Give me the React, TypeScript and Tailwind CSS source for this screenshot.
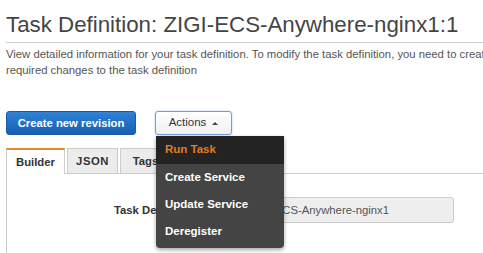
const menuItems = ['Run Task', 'Create Service', 'Update Service', 'Deregister'];

const App = () => {
	return (
		<div className="relative w-[483px] h-[253px] overflow-hidden bg-white text-[#444] font-['Liberation_Sans',Arial,sans-serif]">
			<div className="pl-[6px] pt-[12px]">
				<h1 className="text-[22.3px] leading-[26px] text-[#444] whitespace-nowrap">Task Definition: ZIGI-ECS-Anywhere-nginx1:1</h1>
				<div className="mt-[4px] border-b border-[#cfcfcf]"></div>
				<p className="mt-[3px] text-[11.3px] leading-[16px] text-[#555] whitespace-nowrap">
					View detailed information for your task definition. To modify the task definition, you need to create a new revision with the
					<br />
					required changes to the task definition
				</p>

				<div className="mt-[33px] flex items-start gap-[19px]">
					<button className="w-[130px] h-[24px] rounded-[3px] border border-[#1a5aa6] bg-gradient-to-b from-[#2f82d6] to-[#155fb2] text-white text-[11.3px] font-bold">
						Create new revision
					</button>
					<div className="relative">
						<button className="flex items-center justify-center gap-[6px] w-[77px] h-[24px] rounded-[3px] border border-[#6f9fd8] bg-gradient-to-b from-white to-[#f0f0f0] text-[#333] text-[11.5px] shadow-[0_0_2px_rgba(80,140,220,0.5)]">
							Actions
							<span className="w-0 h-0 border-l-[3px] border-r-[3px] border-b-[3px] border-l-transparent border-r-transparent border-b-[#444]"></span>
						</button>
						<div className="absolute left-[1px] top-[25px] w-[128px] h-[112px] rounded-b-[4px] bg-[#444] shadow-[0_2px_4px_rgba(0,0,0,0.35)] overflow-hidden z-10">
							{menuItems.map((item, i) => (
								<div
									key={item}
									className={i === 0
										? 'h-[28px] flex items-center pl-[9px] bg-[#232323] text-[#e07b24] text-[11.5px] font-bold'
										: 'h-[27px] flex items-center pl-[9px] text-white text-[11.5px] font-bold'}
								>
									{item}
								</div>
							))}
						</div>
					</div>
				</div>

				<div className="mt-[12px] flex items-end gap-[2px] h-[26px]">
					<div className="w-[59px] h-[26px] flex items-center justify-center bg-white border-t-2 border-t-[#e08a2c] border-x border-x-[#ccc] text-[11.3px] font-bold text-[#333] relative top-[1px]">Builder</div>
					<div className="w-[51px] h-[25px] flex items-center justify-center bg-[#ececec] border border-[#ccc] border-b-0 text-[11.3px] font-bold text-[#333] tracking-[0.5px]">JSON</div>
					<div className="w-[51px] h-[25px] flex items-center justify-center bg-[#ececec] border border-[#ccc] border-b-0 text-[11.3px] font-bold text-[#333]">Tags</div>
				</div>

				<div className="h-[100px] border-t border-l border-[#ccc]">
					<div className="mt-[23px] flex items-center">
						<label className="w-[233px] pr-[12px] text-right text-[11.3px] font-bold text-[#333] whitespace-nowrap">Task Definition Name</label>
						<div className="w-[214px] h-[26px] flex items-center pl-[8px] rounded-[3px] border border-[#ccc] bg-[#eeeeee] text-[11.3px] text-[#555]">ZIGI-ECS-Anywhere-nginx1</div>
					</div>
				</div>
			</div>
		</div>
	);
};

export default App;
